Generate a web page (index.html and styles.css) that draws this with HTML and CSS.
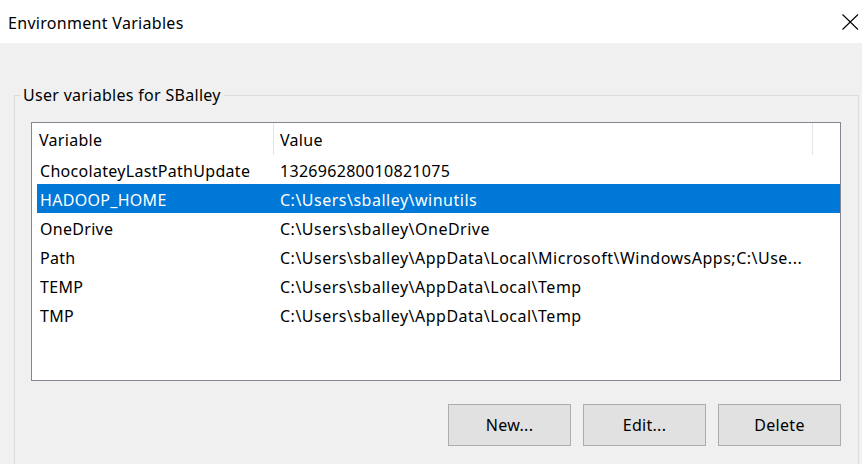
FILE: index.html
```html
<!DOCTYPE html>
<html>
<head>
<meta charset="utf-8">
<link rel="stylesheet" href="styles.css">
</head>
<body>
<div class="titlebar">
  <span class="title">Environment Variables</span>
  <svg class="close" width="17" height="16" viewBox="0 0 17 16"><path d="M0.5 0.5 L16 15.5 M16 0.5 L0.5 15.5" stroke="#000" stroke-width="1.1" fill="none"/></svg>
</div>
<fieldset class="group">
  <legend class="group-label">User variables for SBalley</legend>
  <div class="group-body">
    <div class="listview">
      <div class="lv-header">
        <div class="hcell">Variable</div>
        <div class="hcell">Value</div>
      </div>
      <div class="lv-row"><div class="c1">ChocolateyLastPathUpdate</div><div class="c2">132696280010821075</div></div>
      <div class="lv-row selected"><div class="c1">HADOOP_HOME</div><div class="c2 path">C:\Users\sballey\winutils</div></div>
      <div class="lv-row"><div class="c1">OneDrive</div><div class="c2 path">C:\Users\sballey\OneDrive</div></div>
      <div class="lv-row"><div class="c1">Path</div><div class="c2 path">C:\Users\sballey\AppData\Local\Microsoft\WindowsApps;C:\Use...</div></div>
      <div class="lv-row"><div class="c1">TEMP</div><div class="c2 path">C:\Users\sballey\AppData\Local\Temp</div></div>
      <div class="lv-row"><div class="c1">TMP</div><div class="c2 path">C:\Users\sballey\AppData\Local\Temp</div></div>
    </div>
    <div class="buttons">
      <button class="btn">New...</button>
      <button class="btn">Edit...</button>
      <button class="btn">Delete</button>
    </div>
  </div>
</fieldset>
</body>
</html>
```
FILE: styles.css
```css
* { box-sizing: border-box; }
html, body {
  margin: 0;
  padding: 0;
  background: #f0f0f0;
  height: 464px;
  overflow: hidden;
  font-family: "Noto Sans", "Open Sans", sans-serif;
  font-size: 16px;
  letter-spacing: 0.3px;
  color: #000;
}
.titlebar {
  height: 43px;
  background: #fff;
  display: flex;
  align-items: center;
  justify-content: space-between;
  padding: 0 3px 0 8px;
}
.title {
  padding-top: 2px;
  line-height: 20px;
}
.close {
  display: block;
}
.group {
  margin: 42px 3px 0 14px;
  padding: 0;
  border: 1px solid #dcdcdc;
  border-bottom: none;
  height: 379px;
  min-inline-size: 0;
}
.group-label {
  margin-left: 5px;
  padding: 0 3px;
  line-height: 20px;
}
.group-body {
  padding: 17px 17px 0 16px;
}
.listview {
  background: #fff;
  border: 1px solid #828790;
  height: 259px;
  padding-left: 5px;
  overflow: hidden;
}
.lv-header {
  display: grid;
  grid-template-columns: 237px 539px;
  height: 32px;
}
.hcell {
  border-right: 1px solid #e5e5e5;
  padding-left: 2px;
  display: flex;
  align-items: center;
  padding-top: 2px;
}
.hcell + .hcell {
  padding-left: 6px;
}
.lv-row {
  display: grid;
  grid-template-columns: 237px 539px;
  height: 29px;
  align-items: center;
  white-space: nowrap;
}
.lv-row .c1 {
  padding-left: 3px;
  overflow: hidden;
  padding-top: 2px;
}
.lv-row .c2 {
  padding-left: 6px;
  overflow: hidden;
  padding-top: 2px;
}
.lv-row .path {
  letter-spacing: 0.5px;
}
.lv-row.selected {
  background: #0078d7;
  color: #fff;
}
.buttons {
  display: flex;
  justify-content: flex-end;
  gap: 12px;
  margin-top: 23px;
}
.btn {
  width: 123px;
  height: 42px;
  background: #e1e1e1;
  border: 1px solid #adadad;
  border-radius: 0;
  font-family: inherit;
  font-size: 16px;
  letter-spacing: inherit;
  color: #000;
  padding: 0;
}
```
